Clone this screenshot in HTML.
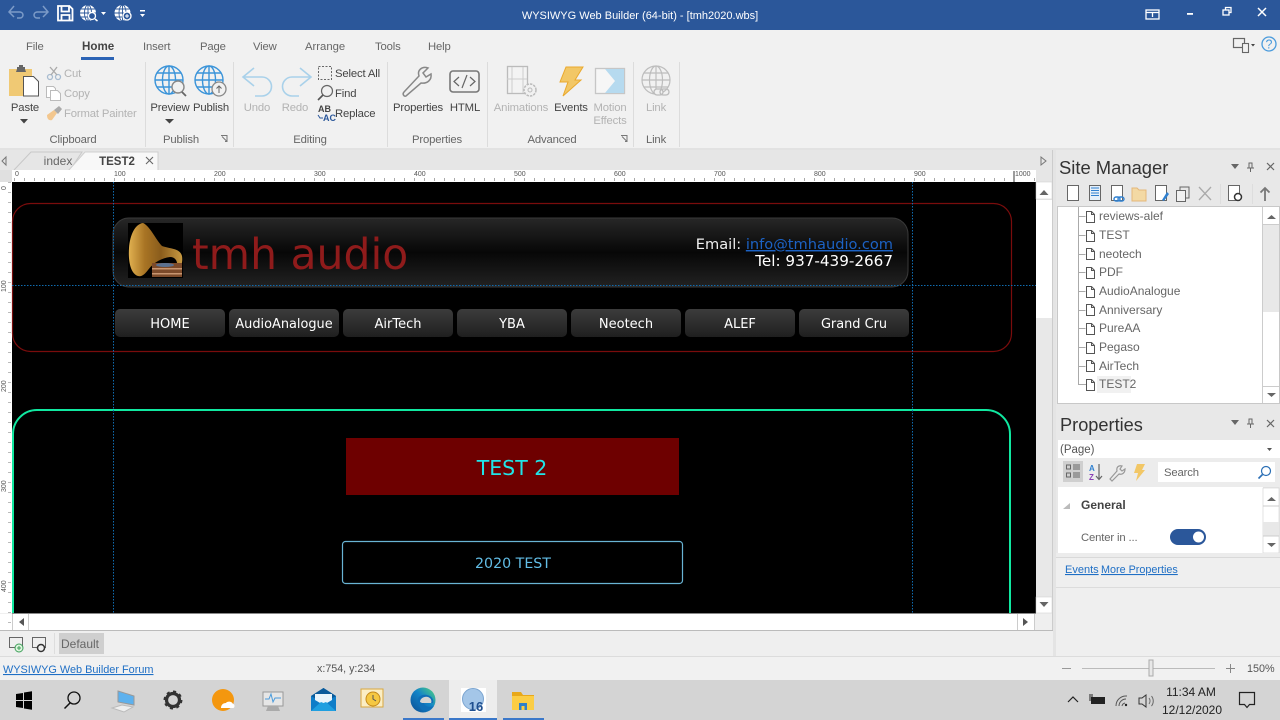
<!DOCTYPE html>
<html lang="en">
<head>
<meta charset="utf-8">
<title>WYSIWYG Web Builder (64-bit) - [tmh2020.wbs]</title>
<style>
html,body{margin:0;padding:0;width:1280px;height:720px;overflow:hidden;background:#f0f0f0}
svg{display:block;position:absolute;left:0;top:0}
text{font-family:"Liberation Sans",sans-serif;font-size:11.3px;letter-spacing:-.15px;fill:#444}
.d{fill:#b3b3b3}
.g{fill:#666}
.n{font-size:12px;letter-spacing:0}
.v{font-family:"DejaVu Sans",sans-serif;letter-spacing:0}
.r{font-size:7px;fill:#555;letter-spacing:0}
.lnk{fill:#1f6fc5;text-decoration:underline;letter-spacing:0}
</style>
</head>
<body>
<svg width="1280" height="720" viewBox="0 0 1280 720" xmlns="http://www.w3.org/2000/svg">
<defs>
<pattern id="tk" x="14" y="170" width="10" height="12" patternUnits="userSpaceOnUse"><rect x="0" y="8" width="1" height="3" fill="#aaa"/></pattern>
<pattern id="vk" x="0" y="182" width="12" height="10" patternUnits="userSpaceOnUse"><rect x="8" y="0" width="3" height="1" fill="#bbb"/></pattern>
<linearGradient id="hdr" x1="0" y1="0" x2="0" y2="1"><stop offset="0" stop-color="#272727"/><stop offset=".5" stop-color="#070707"/><stop offset="1" stop-color="#222"/></linearGradient>
<linearGradient id="btn" x1="0" y1="0" x2="0" y2="1"><stop offset="0" stop-color="#3c3c3c"/><stop offset="1" stop-color="#1f1f1f"/></linearGradient>
<linearGradient id="horn" x1="0" y1="0" x2="1" y2="0"><stop offset="0" stop-color="#e0b050"/><stop offset=".3" stop-color="#a87424"/><stop offset=".6" stop-color="#8a5c1c"/><stop offset="1" stop-color="#c89a42"/></linearGradient>
<linearGradient id="edge" x1="0" y1="1" x2="1" y2="0"><stop offset="0" stop-color="#0c4d92"/><stop offset=".55" stop-color="#1384c8"/><stop offset="1" stop-color="#54d67c"/></linearGradient>
<g id="pg"><path d="M.5.5h5l3 3v8h-8z" fill="#fff" stroke="#555" stroke-width="1"/><path d="M5.5.5v3h3" fill="none" stroke="#555"/></g>
<g id="globe" fill="none" stroke="#3b94d9" stroke-width="1.4"><circle r="14"/><ellipse rx="6.5" ry="14"/><path d="M0-14V14M-14 0H14M-12-7H12M-12 7H12"/></g>
<g id="globeg" fill="none" stroke="#bdbdbd" stroke-width="1.2"><circle r="14"/><ellipse rx="6.5" ry="14"/><path d="M0-14V14M-14 0H14M-12-7H12M-12 7H12"/></g>
<g id="tg"><circle r="8" fill="#fff"/><g fill="none" stroke="#2b579a" stroke-width=".9"><ellipse rx="3.500" ry="8"/><path d="M-8 0H8M-7-4H7M-7 4H7M0-8V8"/></g></g>
</defs>

<!-- title bar -->
<rect width="1280" height="30" fill="#2b579a"/>
<g fill="none" stroke="#7c9bc8" stroke-width="1.500">
<path d="M14 6l-5 6 5 5M9 12h11a3.200 3.200 0 0 1 3 3 3.200 3.200 0 0 1-3 3h-3"/>
<path d="M43 6l5 6-5 5M48 12H37a3.200 3.200 0 0 0-3 3 3.200 3.200 0 0 0 3 3h3"/>
</g>
<g fill="none" stroke="#fff" stroke-width="1.800">
<path d="M58 6h11.500l3 3v11.500H58z"/><path d="M61.500 6v5.500h7.500V6M61.500 20.500v-5.500h8v5.500"/>
</g>
<use href="#tg" x="88" y="13"/><use href="#tg" x="122.500" y="13"/>
<circle cx="92" cy="16" r="3.500" fill="#2b579a" stroke="#fff" stroke-width="1.300"/><path d="M95 19l2.500 2" stroke="#fff" stroke-width="1.500"/>
<circle cx="127" cy="16" r="4" fill="#2b579a" stroke="#fff" stroke-width="1.300"/><path d="M125 16h4M127 14v4" stroke="#fff"/>
<path d="M101 12h5l-2.500 3zM140 14h5l-2.500 3z" fill="#fff"/><rect x="140" y="10" width="5" height="1.500" fill="#fff"/>
<text x="640" y="19" text-anchor="middle" style="font-size:11px;fill:#fff;letter-spacing:0">WYSIWYG Web Builder (64-bit) - [tmh2020.wbs]</text>
<g fill="none" stroke="#fff" stroke-width="1.300">
<rect x="1146" y="10" width="13" height="9"/><path d="M1146 12.500h13M1152.500 17v-5"/>
<path d="M1225.500 10V7.500h5.500V12.500h-2"/><rect x="1223" y="10" width="6" height="5"/>
<path d="M1258 8l8 8M1266 8l-8 8" stroke-width="1.500"/>
</g>
<rect x="1187" y="13" width="6" height="1.800" fill="#fff"/>

<!-- ribbon -->
<rect y="30" width="1280" height="118" fill="#f1f1f1"/>
<rect y="148" width="1280" height="2" fill="#e2e2e2"/>
<text x="26" y="50" class="g">File</text>
<text x="82" y="50" style="font-size:11.600px;font-weight:bold;fill:#444;letter-spacing:0">Home</text>
<text x="143" y="50" class="g">Insert</text>
<text x="200" y="50" class="g">Page</text>
<text x="253" y="50" class="g">View</text>
<text x="305" y="50" class="g" style="letter-spacing:0">Arrange</text>
<text x="375" y="50" class="g">Tools</text>
<text x="428" y="50" class="g">Help</text>
<rect x="81" y="57" width="33" height="3" fill="#2b63b5"/>
<g fill="#dcdcdc"><rect x="145" y="62" width="1" height="85"/><rect x="233" y="62" width="1" height="85"/><rect x="387" y="62" width="1" height="85"/><rect x="487" y="62" width="1" height="85"/><rect x="633" y="62" width="1" height="85"/><rect x="679" y="62" width="1" height="85"/></g>

<!-- Paste -->
<path d="M9 69h23v27H9z" fill="#f0c974"/><path d="M17 69v-2h2v-2h4v2h2v2l1 3H16z" fill="#666"/>
<path d="M23.500 76.500h10l5 5v14.500h-15z" fill="#fff" stroke="#555"/>
<text x="25" y="111" text-anchor="middle">Paste</text>
<path d="M20 119h8l-4 4.500zM165 119h9l-4.500 4.500z" fill="#444"/>
<!-- cut copy painter -->
<g fill="none" stroke="#a8bcd0" stroke-width="1.300"><circle cx="50" cy="77" r="2.500"/><circle cx="58" cy="77" r="2.500"/><path d="M51 75l6-8M57 75l-7-8" stroke="#aaa"/></g>
<g fill="#fff" stroke="#bbb"><path d="M46.500 86.500h7l2 2v9h-9z"/><path d="M50.500 90.500h7l3 3v7h-10z"/></g>
<path d="M47 115l7-5 3 3-5 7c-3 1-5-1-5-5z" fill="#f3c78e"/><path d="M54 110l5-4 3 3-4 5z" fill="#aaa"/>
<text x="64" y="77" class="d">Cut</text><text x="64" y="97" class="d">Copy</text><text x="64" y="117" class="d">Format Painter</text>
<text x="73" y="143" text-anchor="middle" class="g">Clipboard</text>

<!-- publish -->
<use href="#globe" x="169" y="80"/>
<use href="#globe" x="209" y="80"/>
<circle cx="178" cy="87" r="6" fill="#f1f1f1" stroke="#888" stroke-width="1.400"/><path d="M182 92l4 4" stroke="#666" stroke-width="1.800"/>
<circle cx="219" cy="89" r="7" fill="#f1f1f1" stroke="#888" stroke-width="1.300"/><path d="M219 93v-7M216.500 88.500l2.500-2.500 2.500 2.500" fill="none" stroke="#666"/>
<text x="170" y="111" text-anchor="middle">Preview</text>
<text x="211" y="111" text-anchor="middle">Publish</text>
<text x="181" y="143" text-anchor="middle" class="g">Publish</text>
<path d="M221 135.500h6v6h-2M222 136.500l5 5" fill="none" stroke="#777"/>
<path d="M621 135.500h6v6h-2M622 136.500l5 5" fill="none" stroke="#777"/>

<!-- editing -->
<g fill="none" stroke="#a9d1ea" stroke-width="1.600">
<path d="M254 68l-11 9 11 9M243 77h19a9.500 9.500 0 0 1 0 19h-7"/>
<path d="M300 68l11 9-11 9M311 77h-19a9.500 9.500 0 0 0 0 19h7"/>
</g>
<text x="257" y="111" text-anchor="middle" class="d">Undo</text>
<text x="295" y="111" text-anchor="middle" class="d">Redo</text>
<rect x="318.500" y="66.500" width="13" height="13" fill="none" stroke="#666" stroke-dasharray="2 1.500"/>
<circle cx="327" cy="91" r="5.500" fill="none" stroke="#666" stroke-width="1.200"/><path d="M323 95l-5 5" stroke="#555" stroke-width="1.600"/>
<text x="318" y="112" style="font-size:9px;font-weight:bold;letter-spacing:0">AB</text>
<text x="323" y="121" style="font-size:9px;font-weight:bold;fill:#2b579a;letter-spacing:0">AC</text>
<path d="M318 115l2 3h3" fill="none" stroke="#2b579a"/>
<text x="335" y="77">Select All</text><text x="335" y="97">Find</text><text x="335" y="117">Replace</text>
<text x="310" y="143" text-anchor="middle" class="g">Editing</text>

<!-- properties -->
<path d="M404 92l15-16c-2-6 3-10 9-8l-5 5 3 4 5-3c1 6-4 10-10 9l-15 13c-2 1-4-2-2-4z" fill="none" stroke="#888" stroke-width="1.500"/>
<rect x="450" y="71" width="29" height="21" rx="3" fill="none" stroke="#777" stroke-width="1.600"/>
<path d="M459 77l-5 4.500 5 4.500M470 77l5 4.500-5 4.500M467 75l-5 13" fill="none" stroke="#666" stroke-width="1.200"/>
<text x="418" y="111" text-anchor="middle">Properties</text>
<text x="465" y="111" text-anchor="middle">HTML</text>
<text x="437" y="143" text-anchor="middle" class="g">Properties</text>

<!-- advanced -->
<rect x="507.500" y="66.500" width="20" height="27" fill="#f3f3f3" stroke="#bbb" stroke-width="1.300"/><path d="M507 79h20M512 67v26M523 67v26" stroke="#ccc" fill="none"/>
<circle cx="530" cy="90" r="6" fill="#f1f1f1" stroke="#bbb" stroke-width="1.500" stroke-dasharray="2.500 1"/><circle cx="530" cy="90" r="2" fill="none" stroke="#bbb"/>
<path d="M566 67h17l-8 13h6l-18 16 5-14h-8z" fill="#f2c766" stroke="#eaa92d"/>
<rect x="595.500" y="68.500" width="29" height="25" fill="#f6f6f6" stroke="#c6c6c6" stroke-width="1.300"/>
<path d="M605 69h19v24h-19l10-12z" fill="#b6daef"/>
<use href="#globeg" x="656" y="80"/>
<rect x="654" y="89" width="9" height="6" rx="3" fill="#f1f1f1" stroke="#bbb" stroke-width="1.300"/><rect x="660" y="89" width="9" height="6" rx="3" fill="none" stroke="#bbb" stroke-width="1.300"/>
<text x="521" y="111" text-anchor="middle" class="d">Animations</text>
<text x="571" y="111" text-anchor="middle">Events</text>
<text x="610" y="111" text-anchor="middle" class="d">Motion</text>
<text x="610" y="124" text-anchor="middle" class="d">Effects</text>
<text x="656" y="111" text-anchor="middle" class="d">Link</text>
<text x="552" y="143" text-anchor="middle" class="g">Advanced</text>
<text x="656" y="143" text-anchor="middle" class="g">Link</text>

<!-- help icons -->
<rect x="1233.500" y="38.500" width="11" height="9" fill="none" stroke="#666" stroke-width="1.200"/><rect x="1242.500" y="43.500" width="6" height="9" fill="#f1f1f1" stroke="#666" stroke-width="1.100"/>
<path d="M1251 44h4l-2 2.500z" fill="#444"/>
<circle cx="1269" cy="44" r="7" fill="none" stroke="#4a9bdc" stroke-width="1.300"/>
<text x="1269" y="48.500" text-anchor="middle" style="font-size:12.500px;fill:#4a9bdc;letter-spacing:0">?</text>

<!-- doc tabs -->
<rect y="150" width="1053" height="20" fill="#e6e6e6"/>
<path d="M6 157v8l-4-4z" fill="none" stroke="#777"/>
<path d="M1041 157v8l5-4z" fill="none" stroke="#777"/>
<path d="M14 170l17-18h51l-12 18" fill="#e6e6e6" stroke="#c8c8c8"/>
<path d="M68 171l17-19h73v18" fill="#f8f8f8" stroke="#cfcfcf"/>
<text x="58" y="165" text-anchor="middle" class="g n">index</text>
<text x="117" y="165" text-anchor="middle" style="font-size:11.500px;font-weight:bold;letter-spacing:0">TEST2</text>
<path d="M146 157l7 7M153 157l-7 7" stroke="#666" stroke-width="1.100"/>

<!-- rulers -->
<rect x="0" y="170" width="1036" height="12" fill="#fff"/>
<rect x="12" y="170" width="1036" height="12" fill="url(#tk)"/>
<rect x="0" y="170" width="12" height="12" fill="#e0e0e0"/>
<rect x="0" y="182" width="12" height="431" fill="#fff"/>
<rect x="0" y="182" width="12" height="431" fill="url(#vk)"/>
<rect x="1036" y="170" width="17" height="12" fill="#e6e6e6"/>
<rect x="1012" y="170" width="21" height="12" fill="#fff"/>
<rect x="1013" y="171" width="2" height="11" fill="#9c9c9c"/>
<rect x="1052" y="150" width="1" height="481" fill="#ccc"/>
<text x="15" y="176" class="r">0</text><text x="114" y="176" class="r">100</text><text x="214" y="176" class="r">200</text><text x="314" y="176" class="r">300</text><text x="414" y="176" class="r">400</text><text x="514" y="176" class="r">500</text><text x="614" y="176" class="r">600</text><text x="714" y="176" class="r">700</text><text x="814" y="176" class="r">800</text><text x="914" y="176" class="r">900</text><text x="1015" y="176" class="r">1000</text>
<text transform="translate(6,190) rotate(-90)" class="r">0</text>
<text transform="translate(6,292) rotate(-90)" class="r">100</text>
<text transform="translate(6,392) rotate(-90)" class="r">200</text>
<text transform="translate(6,492) rotate(-90)" class="r">300</text>
<text transform="translate(6,592) rotate(-90)" class="r">400</text>

<!-- canvas -->
<rect x="12" y="182" width="1024" height="431" fill="#000"/>
<rect x="12.500" y="203.500" width="999" height="148" rx="18" fill="none" stroke="#7a0c0c" stroke-width="1.200"/>
<path d="M13 620V434a24 24 0 0 1 24-24H986a24 24 0 0 1 24 24V620" fill="none" stroke="#10e8a0" stroke-width="2"/>
<rect x="12" y="613" width="1024" height="1" fill="#888"/>

<!-- header -->
<rect x="113" y="218" width="795" height="69" rx="16" fill="url(#hdr)" stroke="#3a3a3a"/>
<rect x="128" y="223" width="55" height="55" fill="#000"/>
<path d="M143 223C150 226 156 240 162 246C170 249 180 248 182 256C183 262 181 266 180 269L177 268C178 262 176 257 170 257C162 258 154 262 148 270C145 274 142 277 138 276C131 274 128 262 129 248C130 235 135 224 143 223Z" fill="url(#horn)"/>
<rect x="152" y="263" width="30" height="14" fill="#7c4a2a"/><rect x="152" y="268" width="30" height="1.500" fill="#c89570"/><rect x="152" y="273" width="30" height="1.500" fill="#c89570"/>
<ellipse cx="165" cy="265" rx="9" ry="2" fill="#5a7090"/>
<text x="192" y="269" class="v" style="font-size:42.500px;fill:#8f1b1b">tmh audio</text>
<text x="893" y="249" text-anchor="end" class="v" style="font-size:14.600px;fill:#eee">Email: <tspan fill="#1c62c4" style="text-decoration:underline">info@tmhaudio.com</tspan></text>
<text x="893" y="266" text-anchor="end" class="v" style="font-size:15.200px;fill:#fff">Tel: 937-439-2667</text>

<!-- nav -->
<g fill="url(#btn)">
<rect x="115" y="309" width="110" height="28" rx="5"/><rect x="229" y="309" width="110" height="28" rx="5"/><rect x="343" y="309" width="110" height="28" rx="5"/><rect x="457" y="309" width="110" height="28" rx="5"/><rect x="571" y="309" width="110" height="28" rx="5"/><rect x="685" y="309" width="110" height="28" rx="5"/><rect x="799" y="309" width="110" height="28" rx="5"/>
</g>
<text x="170" y="328" text-anchor="middle" class="v" style="font-size:13px;fill:#fff">HOME</text>
<text x="284" y="328" text-anchor="middle" class="v" style="font-size:12.900px;fill:#fff">AudioAnalogue</text>
<text x="398" y="328" text-anchor="middle" class="v" style="font-size:13px;fill:#fff">AirTech</text>
<text x="512" y="328" text-anchor="middle" class="v" style="font-size:13px;fill:#fff">YBA</text>
<text x="626" y="328" text-anchor="middle" class="v" style="font-size:13px;fill:#fff">Neotech</text>
<text x="740" y="328" text-anchor="middle" class="v" style="font-size:13px;fill:#fff">ALEF</text>
<text x="854" y="328" text-anchor="middle" class="v" style="font-size:12.900px;fill:#fff">Grand Cru</text>

<!-- content -->
<rect x="346" y="438" width="333" height="57" fill="#6e0000"/>
<text x="512" y="475" text-anchor="middle" class="v" style="font-size:20.500px;fill:#20e4e8">TEST 2</text>
<rect x="342.500" y="541.500" width="340" height="42" rx="3" fill="none" stroke="#69b4d4" stroke-width="1.200"/>
<text x="513" y="568" text-anchor="middle" class="v" style="font-size:14.200px;fill:#62bde6">2020 TEST</text>

<!-- guides -->
<g stroke="#0f6cb0" stroke-dasharray="1.500 1.500" stroke-width="1" fill="none">
<path d="M113.500 182V613M912.500 182V613M12 285.500H1036"/>
</g>

<!-- canvas scrollbars -->
<rect x="1036" y="182" width="16" height="431" fill="#e8e8e8"/>
<rect x="1036" y="200" width="16" height="118" fill="#fff"/>
<rect x="1036" y="182" width="16" height="17" fill="#fff" stroke="#ccc" stroke-width=".5"/>
<rect x="1036" y="597" width="16" height="16" fill="#fff" stroke="#ccc" stroke-width=".5"/>
<path d="M1039.500 195l4.500-5 4.500 5zM1039.500 602l4.500 5 4.500-5z" fill="#666"/>
<rect x="0" y="614" width="1052" height="16" fill="#fff"/>
<rect x="0" y="630" width="1053" height="1" fill="#bbb"/>
<rect x="0" y="614" width="12" height="16" fill="url(#vk)"/>
<path d="M12.500 614v16M28.500 614v16M1017.500 614v16M1034.500 614v16" stroke="#ccc"/>
<rect x="1035" y="614" width="17" height="16" fill="#efefef"/>
<path d="M24 618v8l-5-4zM1023 618v8l5-4z" fill="#555"/>

<!-- bottom strip -->
<rect y="631" width="1053" height="25" fill="#efefef"/>
<rect y="656" width="1280" height="1" fill="#dcdcdc"/>
<rect x="1053" y="150" width="3" height="506" fill="#e4e4e4"/>
<rect x="1056" y="587" width="224" height="69" fill="#efefef"/>
<g fill="none" stroke="#666"><rect x="9.500" y="637.500" width="13" height="10"/><rect x="32.500" y="637.500" width="13" height="10"/></g>
<circle cx="19" cy="648" r="4" fill="#dff5df" stroke="#3ea05a"/><path d="M17 648h4M19 646v4" stroke="#3ea05a"/>
<circle cx="41" cy="648" r="3.500" fill="#efefef" stroke="#333" stroke-width="1.500"/>
<rect x="54" y="633" width="1" height="21" fill="#ddd"/>
<rect x="59" y="633" width="45" height="21" fill="#cfcfcf"/>
<text x="80" y="648" text-anchor="middle" class="g n">Default</text>

<!-- status bar -->
<rect y="657" width="1280" height="23" fill="#f1f1f1"/>
<text x="3" y="673" class="lnk" style="font-size:10.900px">WYSIWYG Web Builder Forum</text>
<text x="317" y="672" style="font-size:10.700px;fill:#555;letter-spacing:0">x:754, y:234</text>
<rect x="1062" y="668" width="9" height="1" fill="#999"/>
<rect x="1082" y="668" width="133" height="1" fill="#bbb"/>
<rect x="1149" y="660" width="4" height="16" fill="#e8e8e8" stroke="#aaa"/>
<path d="M1226 668.500h9M1230.500 664v9" stroke="#888"/>
<text x="1247" y="672" style="font-size:10.800px;fill:#555;letter-spacing:0">150%</text>

<!-- right panel -->
<rect x="1056" y="150" width="224" height="437" fill="#e8e8e8"/>
<text x="1059" y="174" style="font-size:18.400px;fill:#333;letter-spacing:0">Site Manager</text>
<path d="M1231 164h8l-4 5zM1231 420h8l-4 5z" fill="#666"/>
<g stroke="#666" fill="none"><path d="M1249 163v5h3v-5zM1247 168h7M1250.500 168v4M1249 419v5h3v-5zM1247 424h7M1250.500 424v4"/><path d="M1267 163l7 7M1274 163l-7 7M1267 420l7 7M1274 420l-7 7" stroke-width="1.200"/></g>
<!-- site manager toolbar -->
<rect x="1067.500" y="185.500" width="11" height="15" fill="#fff" stroke="#666"/>
<rect x="1089.500" y="185.500" width="11" height="15" fill="#e6f0fa" stroke="#666"/><path d="M1091 188h8M1091 190.500h8M1091 193h8M1091 195.500h8" stroke="#2f80d0"/>
<rect x="1111.500" y="185.500" width="11" height="15" fill="#fff" stroke="#666"/><rect x="1114" y="197" width="6" height="4" rx="2" fill="none" stroke="#2f80d0" stroke-width="1.400"/><rect x="1118" y="197" width="6" height="4" rx="2" fill="none" stroke="#2f80d0" stroke-width="1.400"/>
<path d="M1132 188h5l2 2h7v11h-14z" fill="#f3d9a4" stroke="#e4b77a"/>
<rect x="1155.500" y="185.500" width="11" height="15" fill="#fff" stroke="#666"/><path d="M1162 200l5-8 2 2-5 7z" fill="#2f80d0"/>
<rect x="1176.500" y="190.500" width="9" height="11" fill="#f1f1f1" stroke="#666"/><path d="M1180 190v-3h9v11h-3" fill="none" stroke="#666"/>
<path d="M1199 187l12 13M1211 187l-12 13" stroke="#aaa" stroke-width="1.300"/>
<rect x="1228.500" y="185.500" width="11" height="15" fill="#fff" stroke="#666"/><circle cx="1238" cy="197" r="3.500" fill="#fff" stroke="#333" stroke-width="1.500"/>
<path d="M1265 201v-13M1260.500 192.500l4.500-4.500 4.500 4.500" fill="none" stroke="#777" stroke-width="1.800"/>
<path d="M1220.500 184v20M1252.500 184v20" stroke="#ddd"/>

<!-- tree -->
<rect x="1057.500" y="206.500" width="222" height="197" fill="#fff" stroke="#c8c8c8"/>
<path d="M1078.500 207V384.500H1086M1078.500 216.500h7M1078.500 235.500h7M1078.500 254.500h7M1078.500 272.500h7M1078.500 291.500h7M1078.500 310.500h7M1078.500 328.500h7M1078.500 347.500h7M1078.500 366.500h7" stroke="#aaa" fill="none"/>
<use href="#pg" x="1086" y="211"/><use href="#pg" x="1086" y="230"/><use href="#pg" x="1086" y="248"/><use href="#pg" x="1086" y="267"/><use href="#pg" x="1086" y="286"/><use href="#pg" x="1086" y="304"/><use href="#pg" x="1086" y="323"/><use href="#pg" x="1086" y="342"/><use href="#pg" x="1086" y="360"/><use href="#pg" x="1086" y="379"/>
<rect x="1097" y="376" width="34" height="17" fill="#f1f1f1"/>
<text x="1099" y="220" class="g n">reviews-alef</text>
<text x="1099" y="239" class="g n">TEST</text>
<text x="1099" y="258" class="g n">neotech</text>
<text x="1099" y="276" class="g n">PDF</text>
<text x="1099" y="295" class="g n">AudioAnalogue</text>
<text x="1099" y="314" class="g n">Anniversary</text>
<text x="1099" y="332" class="g n">PureAA</text>
<text x="1099" y="351" class="g n">Pegaso</text>
<text x="1099" y="370" class="g n">AirTech</text>
<text x="1099" y="388" class="g n">TEST2</text>
<rect x="1263" y="207" width="16" height="196" fill="#fff"/>
<rect x="1263" y="224" width="16" height="88" fill="#e8e8e8"/>
<path d="M1262.500 207v196M1263 224.500h16M1263 386.500h16" stroke="#ccc"/>
<path d="M1267 219l4.500-4 4.500 4zM1267 393l4.500 4 4.500-4z" fill="#666"/>

<!-- properties -->
<text x="1060" y="431" style="font-size:18.200px;fill:#333;letter-spacing:0">Properties</text>
<rect x="1058" y="440" width="222" height="18" fill="#fff"/>
<text x="1060" y="453" style="font-size:11.500px;fill:#555;letter-spacing:0">(Page)</text>
<path d="M1267 448h5l-2.500 3z" fill="#555"/>
<rect x="1058" y="458" width="222" height="29" fill="#ececec"/>
<rect x="1063" y="461" width="20" height="21" fill="#cfcfcf"/>
<g fill="none" stroke="#666"><rect x="1066.500" y="465" width="4" height="4"/><rect x="1066.500" y="473" width="4" height="4"/><path d="M1073 465h7M1073 467h7M1073 469h7M1073 473h7M1073 475h7M1073 477h7"/></g>
<text x="1089" y="471" style="font-size:8px;font-weight:bold;fill:#2f80d0;letter-spacing:0">A</text>
<text x="1089" y="480" style="font-size:8px;font-weight:bold;fill:#8a3fb5;letter-spacing:0">Z</text>
<path d="M1099 464v15M1096 476l3 3.500 3-3.500" fill="none" stroke="#666" stroke-width="1.200"/>
<path d="M1110 479l7-8c-1-4 2-6 5-5l-2 3 2 2 3-2c0 4-3 6-6 5l-7 7z" fill="none" stroke="#999" stroke-width="1.200"/>
<path d="M1137 464h8l-3 6h3l-9 11 2-8h-4z" fill="#f2c766"/>
<rect x="1158" y="462" width="117" height="20" fill="#fff"/>
<text x="1164" y="476" class="g">Search</text>
<circle cx="1266" cy="471" r="4.500" fill="none" stroke="#2b6fb5" stroke-width="1.200"/><path d="M1262.500 474.500l-4 4" stroke="#2b6fb5" stroke-width="1.600"/>
<rect x="1058" y="487" width="205" height="66" fill="#fff"/>
<path d="M1063 509l7-6v6z" fill="#bbb"/>
<text x="1081" y="509" style="font-size:12px;font-weight:bold;letter-spacing:0">General</text>
<text x="1081" y="541" class="g">Center in ...</text>
<rect x="1170" y="529" width="36" height="16" rx="8" fill="#2b579a"/>
<circle cx="1198.500" cy="537" r="5.500" fill="#fff"/>
<rect x="1263" y="488" width="16" height="65" fill="#fff" stroke="#d0d0d0" stroke-width=".6"/>
<rect x="1263" y="522" width="16" height="14" fill="#e8e8e8"/>
<path d="M1263 506h16M1263 536h16" stroke="#ccc"/>
<path d="M1267 501l4.500-4 4.500 4zM1267 543l4.500 4 4.500-4z" fill="#666"/>
<rect x="1056" y="553" width="224" height="4" fill="#ececec"/>
<rect x="1056" y="557" width="224" height="30" fill="#efefef"/>
<rect x="1056" y="557" width="224" height="1" fill="#d9d9d9"/>
<rect x="1056" y="587" width="224" height="1" fill="#dcdcdc"/>
<text x="1065" y="573" class="lnk" style="font-size:11px">Events</text>
<text x="1101" y="573" class="lnk" style="font-size:10.800px">More Properties</text>

<!-- taskbar -->
<rect y="680" width="1280" height="40" fill="#d4d4d4"/>
<rect x="449" y="680" width="48" height="40" fill="#ededed"/>
<g fill="#3b78c9"><rect x="403" y="718" width="41" height="2"/><rect x="449" y="718" width="48" height="2"/><rect x="503" y="718" width="41" height="2"/></g>
<!-- start -->
<path d="M16 694l7-1v7h-7zM24 692.500l8-1.200V700h-8zM16 701h7v7l-7-1zM24 701h8v8.700l-8-1.200z" fill="#000"/>
<!-- search -->
<circle cx="74" cy="698" r="6" fill="none" stroke="#111" stroke-width="1.300"/><path d="M70 703l-5.500 5.500" stroke="#111" stroke-width="1.500"/>
<!-- computer -->
<path d="M118 691l16 5v9l-16-3z" fill="#5db1ee" stroke="#999"/><path d="M112 708l10-3 11 2-9 5z" fill="#eee" stroke="#bbb"/>
<!-- gear -->
<circle cx="173" cy="700" r="6.500" fill="none" stroke="#333" stroke-width="3.200"/><circle cx="173" cy="700" r="8.200" fill="none" stroke="#333" stroke-width="2.500" stroke-dasharray="3 3.400"/>
<!-- orange -->
<circle cx="223" cy="700" r="11" fill="#f4970f"/><path d="M221 708c0-3 2-5 5-5 1-2 6-2 7 1 2 0 2 4 0 4z" fill="#fff"/>
<!-- monitor -->
<rect x="263" y="692" width="20" height="14" fill="#e6e6e6" stroke="#999"/><path d="M265 699h4l2-5 2 8 2-4h6" fill="none" stroke="#4a9bdc"/><path d="M268 706h10l2 5h-14z" fill="#aaa"/>
<!-- mail -->
<path d="M311 696l12.500-8 12.500 8v15h-25z" fill="#0f7dc8"/><path d="M311 696l12.500-8 12.500 8-12.500 7z" fill="#0a5a9a"/><path d="M315 694h17v6l-8.500 5-8.500-5z" fill="#e8f4fb"/><path d="M311 711l10-9 2.500 1 2.500-1 10 9z" fill="#1f9fe0"/>
<!-- outlook-like -->
<rect x="361" y="689" width="22" height="18" fill="#fbeec4" stroke="#d8a73f"/><circle cx="373" cy="699" r="7" fill="#f5c842" stroke="#c48a1a"/><path d="M373 695v4l3 2" fill="none" stroke="#555"/>
<!-- edge -->
<circle cx="423" cy="700" r="12.500" fill="url(#edge)"/><path d="M418 703c-2-6 4-9 9-8 5 1 7 5 6 8h-9c0 3 5 5 10 3-3 4-8 6-12 4-2-2-3-4-4-7z" fill="#0f6fb8"/><path d="M420 702c0-4 5-6 8-5 3 1 4 4 3 6h-9z" fill="#d4d4d4"/>
<!-- app 16 -->
<rect x="461" y="688" width="25" height="24" fill="#fff"/><circle cx="473" cy="699" r="10.500" fill="#a4c6e8" stroke="#7aa4d0"/><text x="476" y="711" text-anchor="middle" style="font-size:13px;font-weight:bold;fill:#1f4f8f;letter-spacing:0">16</text>
<!-- folder -->
<path d="M512 692h9l2 3h11v2h-22z" fill="#e8a81a"/><rect x="512" y="696" width="22" height="14" fill="#fbcd45"/><rect x="519" y="703" width="8" height="7" fill="#2f7fc8"/><rect x="521.500" y="706" width="3" height="4" fill="#fbcd45"/>
<!-- tray -->
<path d="M1068 702l5-5 5 5" fill="none" stroke="#222" stroke-width="1.200"/>
<rect x="1091" y="697" width="14" height="7" fill="#222"/><path d="M1090 696v5M1092 696v2M1089 695h4" stroke="#222"/>
<g fill="none" stroke="#555"><path d="M1116 706a10 10 0 0 1 11-10M1119 706a7 7 0 0 1 7-7M1122 706a4 4 0 0 1 3-3"/></g><circle cx="1126" cy="705" r="1.200" fill="#222"/>
<path d="M1139 698h3l4-3v12l-4-3h-3z" fill="none" stroke="#333"/><path d="M1149 698a5 5 0 0 1 0 6M1151.500 696a8 8 0 0 1 0 10" fill="none" stroke="#666"/>
<text x="1191" y="696" text-anchor="middle" class="n" style="fill:#222">11:34 AM</text>
<text x="1192" y="714" text-anchor="middle" class="n" style="fill:#222">12/12/2020</text>
<path d="M1239.500 692.500h15v12h-5l-2.500 3-2.500-3h-5z" fill="none" stroke="#222" stroke-width="1.200"/>
</svg>
</body>
</html>
